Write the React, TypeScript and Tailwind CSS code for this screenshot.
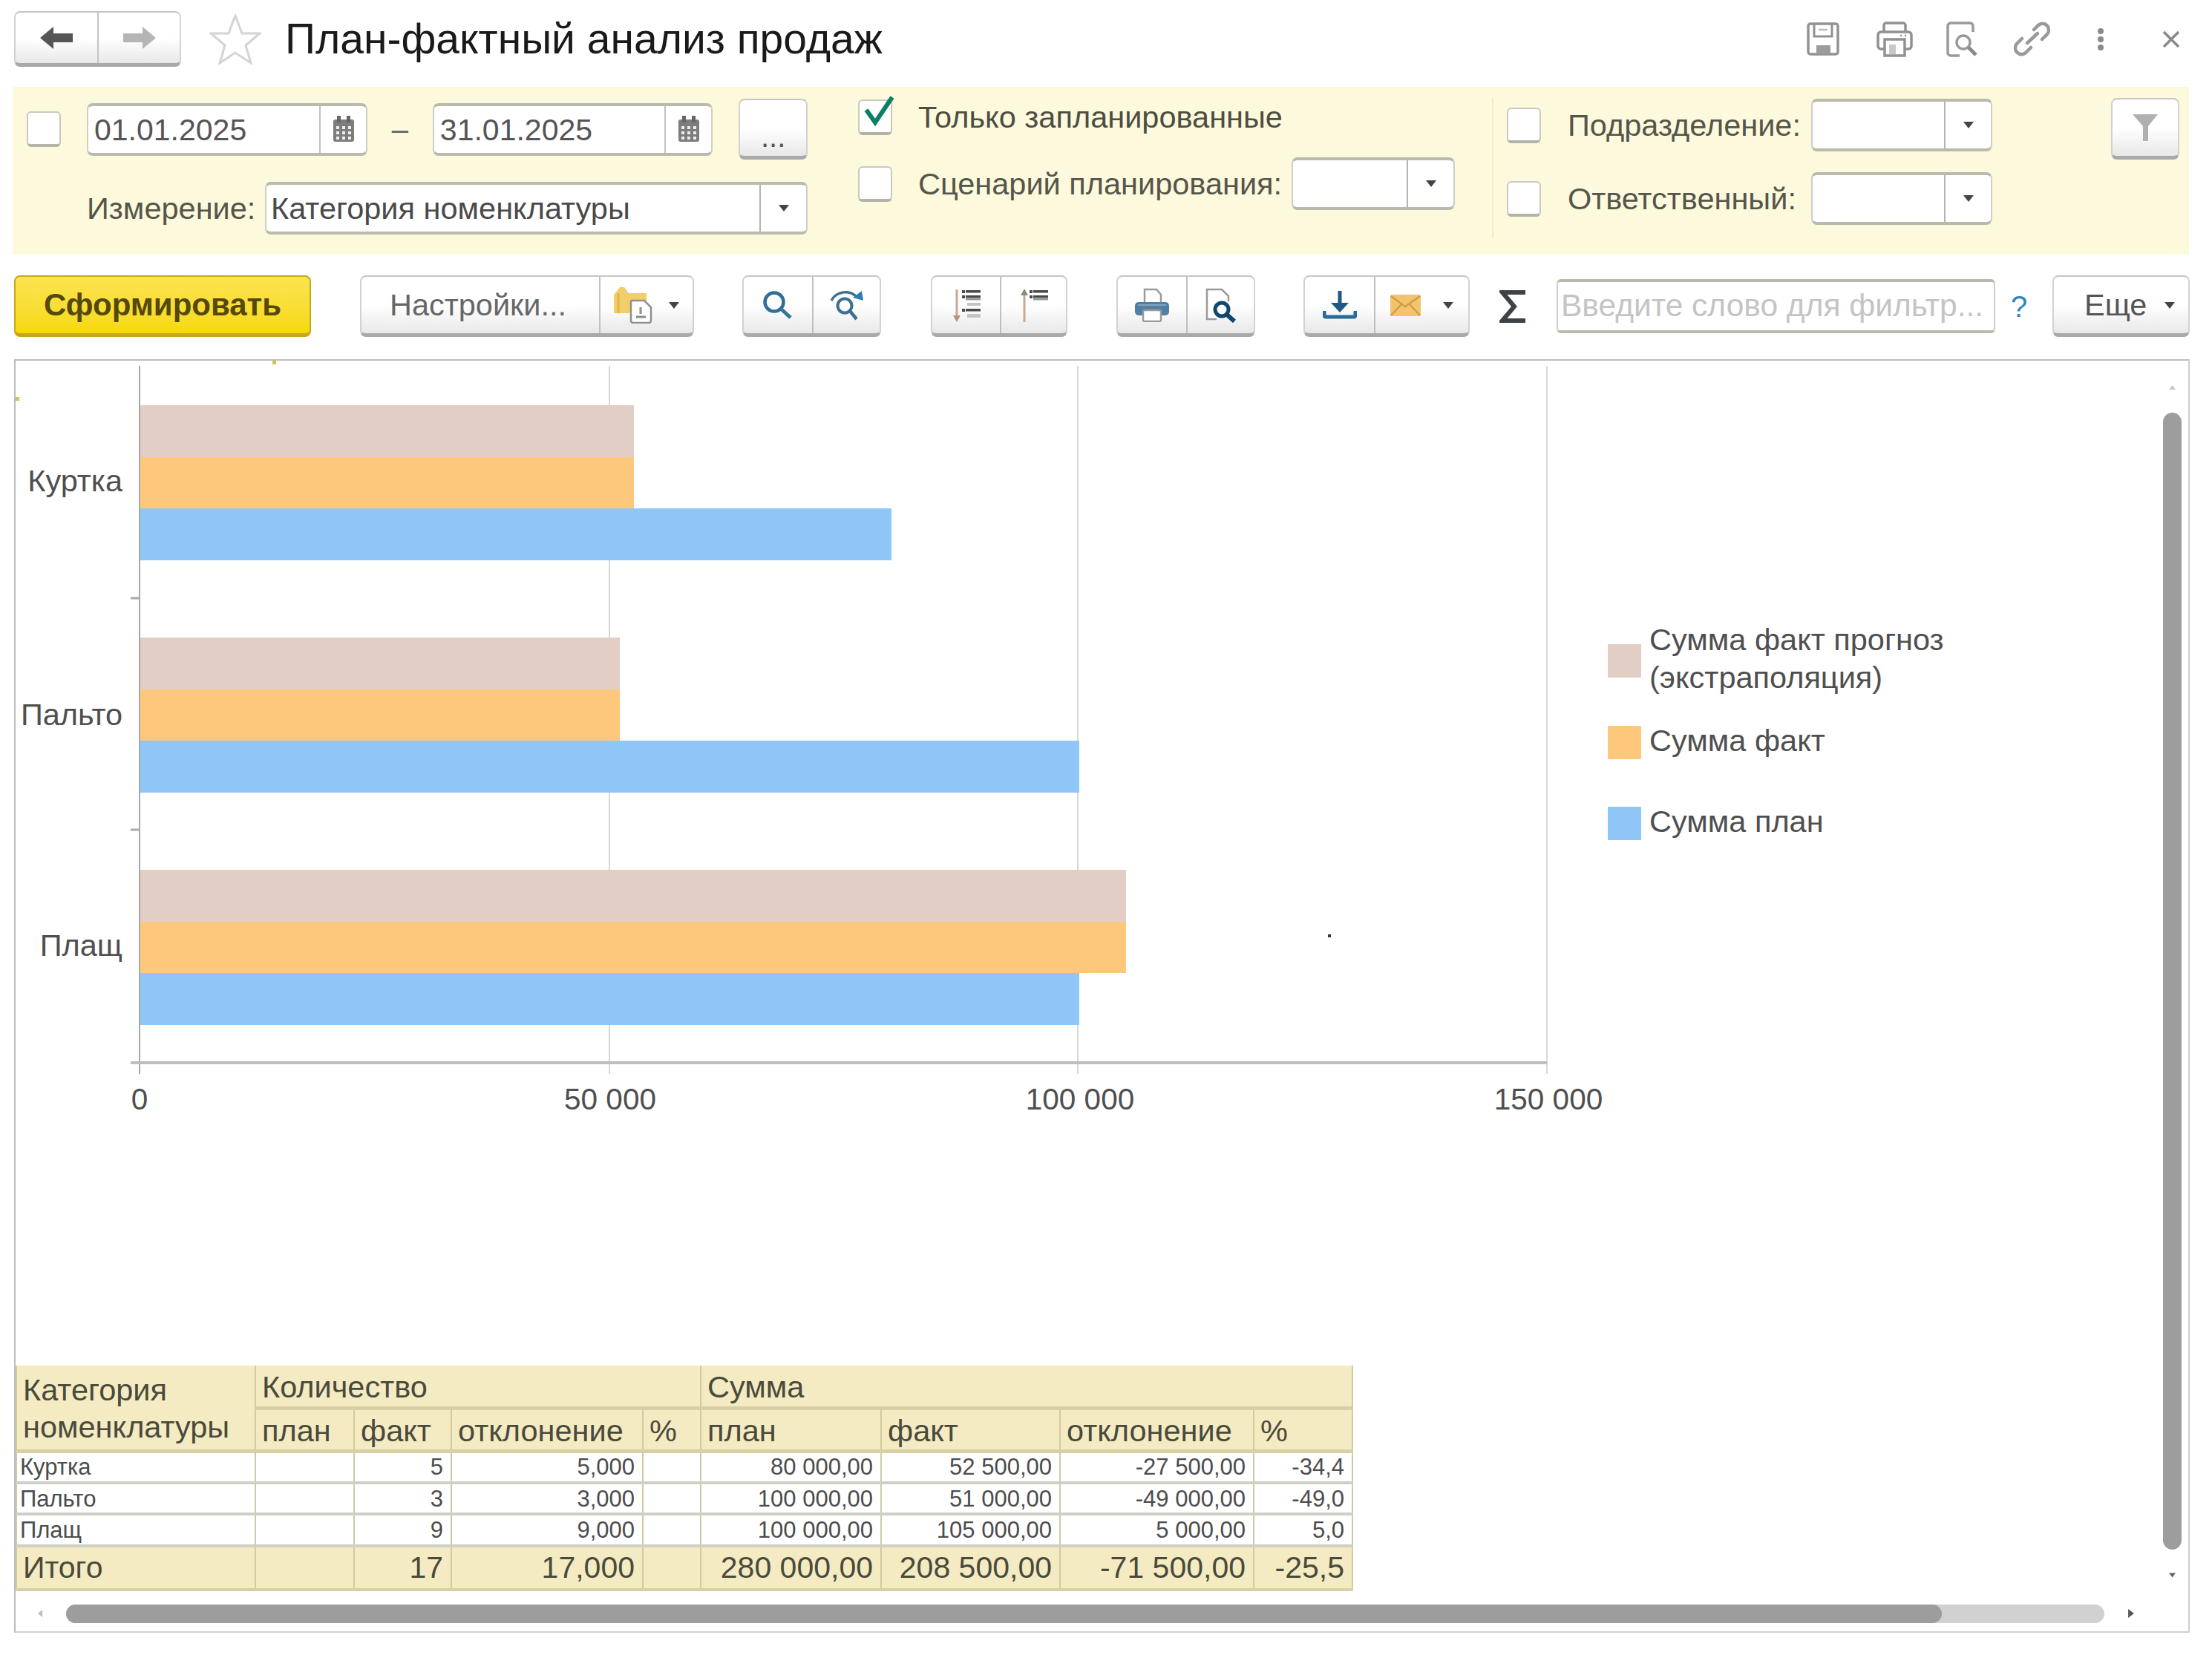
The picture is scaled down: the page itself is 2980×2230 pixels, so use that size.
import type { ReactNode } from "react";

const btn =
  "flex items-center justify-center border-2 border-[#d2d2d2] border-b-[5px] border-b-[#a9a9a9] border-t-[#c6c6c6] bg-linear-to-b from-white from-50% to-[#e8e8e8]";
const field = "flex bg-white border-2 border-[#cfcfc6] border-t-4 border-t-[#b9b9ae] border-b-4 border-b-[#b9b9ae] rounded-lg";

function Caret({ color = "#444" }: { color?: string }) {
  return (
    <svg width="14" height="9" viewBox="0 0 14 9">
      <polygon points="0,0 14,0 7,9" fill={color} />
    </svg>
  );
}

function Checkbox({ checked }: { checked?: boolean }) {
  return (
    <div className="relative h-[48px] w-[46px] shrink-0 rounded-md border-2 border-[#c9c9c0] border-b-4 border-b-[#b3b3a8] border-t-[#c9c9c0] bg-white">
      {checked ? (
        <svg className="absolute -top-[8px] left-[6px]" width="42" height="42" viewBox="0 0 42 42">
          <path d="M3 20 L15 37 L38 3" fill="none" stroke="#0b7f63" strokeWidth="6" />
        </svg>
      ) : null}
    </div>
  );
}

function DateField({ value }: { value: string }) {
  return (
    <div className={`${field} h-[71px] w-[378px] items-center`}>
      <span className="flex-1 pl-[8px] pt-[3px] text-[41px] leading-none text-[#555]">{value}</span>
      <div className="flex h-full w-[63px] items-center justify-center border-l-2 border-[#c4c4bb]">
        <svg width="30" height="36" viewBox="0 0 30 36">
          <rect x="1" y="5" width="28" height="30" rx="3" fill="#7d7d7d" />
          <rect x="6" y="0" width="5" height="9" fill="#666" />
          <rect x="19" y="0" width="5" height="9" fill="#666" />
          <g fill="#eee">
            <rect x="5" y="14" width="4" height="4" />
            <rect x="13" y="14" width="4" height="4" />
            <rect x="21" y="14" width="4" height="4" />
            <rect x="5" y="21" width="4" height="4" />
            <rect x="13" y="21" width="4" height="4" />
            <rect x="21" y="21" width="4" height="4" />
            <rect x="5" y="28" width="4" height="4" />
            <rect x="13" y="28" width="4" height="4" />
            <rect x="21" y="28" width="4" height="4" />
          </g>
        </svg>
      </div>
    </div>
  );
}

function Combo({ width, text }: { width: string; text?: string }) {
  return (
    <div className={`${field} h-[71px] ${width} items-center`}>
      <span className="flex-1 pl-[6px] text-[41.5px] leading-none text-[#4a4a4a]">{text}</span>
      <div className="flex h-full w-[63px] items-center justify-center border-l-2 border-[#b4b4ab]">
        <Caret />
      </div>
    </div>
  );
}

function ToolGroup({ items }: { items: { w: string; node: ReactNode }[] }) {
  return (
    <div className={`${btn} h-[83px] rounded-lg`}>
      {items.map((it, i) => (
        <div key={i} className={`flex h-full ${it.w} items-center justify-center ${i > 0 ? "border-l-2 border-[#c0c0c0]" : ""}`}>
          {it.node}
        </div>
      ))}
    </div>
  );
}

const IconSave = () => (
  <svg width="44" height="45" viewBox="0 0 44 45" fill="none" stroke="#929292">
    <rect x="2" y="2" width="40" height="41" rx="3" strokeWidth="3.5" />
    <path d="M10 3 V19 H34 V3" strokeWidth="3" />
    <path d="M16 10 H28" strokeWidth="2.5" stroke="#bbb" />
    <rect x="13" y="31" width="19" height="12" fill="#9c9c9c" strokeWidth="0" />
  </svg>
);
const IconPrintTop = () => (
  <svg width="49" height="48" viewBox="0 0 49 48" fill="none" stroke="#919191" strokeWidth="3.5">
    <path d="M10 14 V5 a3 3 0 0 1 3-3 H36 a3 3 0 0 1 3 3 V14" />
    <path d="M11 37 H6 a4 4 0 0 1-4-4 V18 a4 4 0 0 1 4-4 H43 a4 4 0 0 1 4 4 V33 a4 4 0 0 1-4 4 H38" />
    <rect x="11" y="24" width="27" height="22" fill="#fff" />
    <rect x="17" y="31" width="9" height="13" fill="#c8c8c8" strokeWidth="0" />
    <path d="M32 19 H34 M38 19 H40" strokeWidth="2.5" />
  </svg>
);
const IconPreviewTop = () => (
  <svg width="44" height="48" viewBox="0 0 44 48" fill="none" stroke="#999" strokeWidth="3.5">
    <path d="M19 46 H7 a4 4 0 0 1-4-4 V6 a4 4 0 0 1 4-4 H33 a4 4 0 0 1 4 4 V14" />
    <circle cx="24" cy="28" r="9" />
    <path d="M31 35 L41 45" strokeWidth="5" stroke="#8a8a8a" />
  </svg>
);
const IconLink = () => (
  <svg width="49" height="47" viewBox="0 0 49 47" fill="none" stroke="#999" strokeWidth="4.5" strokeLinecap="round">
    <path d="M27 11 L33 5 a8.5 8.5 0 0 1 12 12 L38 24" />
    <path d="M11 23 L4 30 a8.5 8.5 0 0 0 12 12 L23 35" />
    <path d="M18 29 L32 16" />
  </svg>
);
const IconFolder = () => (
  <svg width="52" height="50" viewBox="0 0 52 50">
    <path d="M0 11 L8 1 H14 L20 9 H44 V36 H0 Z" fill="#f2cd68" />
    <path d="M6 9 V36" stroke="#e2b54a" strokeWidth="3" />
    <path d="M24 19 H41 L50 28 V46 a3 3 0 0 1-3 3 H26 a3 3 0 0 1-3-3 V20 Z" fill="#fff" stroke="#8f8f8f" strokeWidth="2.5" />
    <path d="M36 28 V37 M30 41 H43" stroke="#8d8d8d" strokeWidth="3" />
  </svg>
);
const IconSearch = () => (
  <svg width="40" height="38" viewBox="0 0 40 38" fill="none" stroke="#2f6e99">
    <circle cx="15" cy="15" r="12.5" strokeWidth="4.5" />
    <path d="M24 24 L37 36" strokeWidth="5" stroke="#3b7295" />
  </svg>
);
const IconSearchAgain = () => (
  <svg width="44" height="41" viewBox="0 0 44 41" fill="none" stroke="#3d6f91">
    <path d="M1 14 C8 1 26 -1 35 9" strokeWidth="3.5" />
    <path d="M30 10 L44 14 L42 1 Z" fill="#2e7db0" strokeWidth="0" />
    <circle cx="19" cy="21" r="9.5" strokeWidth="4" />
    <path d="M26 28 L35 39" strokeWidth="4.5" />
  </svg>
);
const IconSortDown = () => (
  <svg width="38" height="45" viewBox="0 0 38 45">
    <path d="M6 1 V40" stroke="#c9a992" strokeWidth="3" />
    <polygon points="1,36 11,36 6,45" fill="#b0957f" />
    <g fill="#4a4a4a">
      <rect x="13" y="2" width="4" height="4" />
      <rect x="18" y="2" width="20" height="3.5" />
      <rect x="13" y="9" width="4" height="4" />
      <rect x="18" y="9" width="20" height="3.5" />
      <rect x="18" y="13" width="20" height="2.5" fill="#999" />
      <rect x="13" y="27" width="4" height="4" />
      <rect x="18" y="27" width="20" height="3.5" />
    </g>
    <g fill="#c4c4c4">
      <rect x="20" y="19" width="18" height="4" />
      <rect x="20" y="34" width="18" height="5" />
    </g>
  </svg>
);
const IconSortUp = () => (
  <svg width="38" height="45" viewBox="0 0 38 45">
    <path d="M6 6 V45" stroke="#c9a992" strokeWidth="3" />
    <polygon points="1,9 11,9 6,0" fill="#8b8b80" />
    <g fill="#4a4a4a">
      <rect x="13" y="2" width="4" height="4" />
      <rect x="18" y="2" width="20" height="3.5" />
      <rect x="13" y="9" width="4" height="4" />
      <rect x="18" y="9" width="20" height="3.5" />
      <rect x="18" y="13" width="20" height="2.5" fill="#999" />
    </g>
  </svg>
);
const IconPrint = () => (
  <svg width="46" height="46" viewBox="0 0 46 46">
    <path d="M13 20 V2 H29 L35 9 V20" fill="#fff" stroke="#9a9a9a" strokeWidth="2.5" />
    <rect x="0" y="19" width="46" height="18" rx="5" fill="#507fa6" />
    <rect x="4" y="22" width="38" height="2" fill="#82a5c2" />
    <rect x="11" y="30" width="24" height="15" rx="2" fill="#fff" stroke="#9a9a9a" strokeWidth="2.5" />
  </svg>
);
const IconPreview = () => (
  <svg width="42" height="47" viewBox="0 0 42 47" fill="none">
    <path d="M15 42 H2 V2 H22 L31 11 V18" stroke="#9a9a9a" strokeWidth="2.5" fill="#fff" />
    <circle cx="22" cy="29" r="9" stroke="#12466c" strokeWidth="5" />
    <path d="M29 36 L39 45" stroke="#12466c" strokeWidth="6" />
  </svg>
);
const IconDownload = () => (
  <svg width="46" height="39" viewBox="0 0 46 39" fill="none">
    <path d="M23 0 V22" stroke="#1d5a86" strokeWidth="5" />
    <polygon points="11,16 35,16 23,29" fill="#1d5a86" />
    <path d="M2 27 V33 a2 2 0 0 0 2 2 H42 a2 2 0 0 0 2-2 V27" stroke="#2a6b97" strokeWidth="5" />
  </svg>
);
const IconMail = () => (
  <svg width="41" height="29" viewBox="0 0 41 29">
    <rect x="0" y="0" width="41" height="29" rx="2" fill="#f3c46c" />
    <path d="M1 2 L20 16 L40 2 M1 28 L15 13 M40 28 L26 13" fill="none" stroke="#d29d45" strokeWidth="2.5" />
  </svg>
);

const bars = [
  { top: 546, forecast: 854, fact: 854, plan: 1201 },
  { top: 859, forecast: 835, fact: 835, plan: 1454 },
  { top: 1172, forecast: 1517, fact: 1517, plan: 1454 },
];

function Chart() {
  return (
    <svg className="block h-[1354px] w-[2893px]" viewBox="21 486 2893 1354">
      {[821, 1452, 2084].map((x) => (
        <path key={x} d={`M${x} 493 V1447`} stroke="#d8d8d8" strokeWidth="2" />
      ))}
      {bars.map((b) => (
        <g key={b.top}>
          <rect x="188" y={b.top} width={b.forecast - 188} height="70" fill="#e3cec6" />
          <rect x="188" y={b.top + 70} width={b.fact - 188} height="69" fill="#fdc87c" />
          <rect x="188" y={b.top + 139} width={b.plan - 188} height="70" fill="#8ec6f8" />
        </g>
      ))}
      <path d="M188 493 V1447" stroke="#a8a8a8" strokeWidth="2" />
      <path d="M176 1432 H2084" stroke="#bdbdbd" strokeWidth="4" />
      <path d="M176 806 H188 M176 1118 H188" stroke="#a8a8a8" strokeWidth="3" />
      <g className="fill-[#4f4f4f] text-[41.5px]">
        <text x="165" y="662" textAnchor="end">Куртка</text>
        <text x="165" y="977" textAnchor="end">Пальто</text>
        <text x="165" y="1288" textAnchor="end">Плащ</text>
        <text x="2222" y="876">Сумма факт прогноз</text>
        <text x="2222" y="927">(экстраполяция)</text>
        <text x="2222" y="1012">Сумма факт</text>
        <text x="2222" y="1121">Сумма план</text>
      </g>
      <g className="fill-[#4f4f4f] text-[40.5px]">
        <text x="188" y="1495" textAnchor="middle">0</text>
        <text x="822" y="1495" textAnchor="middle">50 000</text>
        <text x="1455" y="1495" textAnchor="middle">100 000</text>
        <text x="2086" y="1495" textAnchor="middle">150 000</text>
      </g>
      <rect x="2166" y="868" width="45" height="45" fill="#e3cec6" />
      <rect x="2166" y="978" width="45" height="45" fill="#fdc87c" />
      <rect x="2166" y="1087" width="45" height="45" fill="#8ec6f8" />
      <rect x="1789" y="1259" width="4" height="4" fill="#333" />
      <rect x="367" y="486" width="5" height="5" fill="#d8c24a" />
      <rect x="21" y="535" width="5" height="5" fill="#d8c24a" />
    </svg>
  );
}

const rows = [
  ["Куртка", "", "5", "5,000", "", "80 000,00", "52 500,00", "-27 500,00", "-34,4"],
  ["Пальто", "", "3", "3,000", "", "100 000,00", "51 000,00", "-49 000,00", "-49,0"],
  ["Плащ", "", "9", "9,000", "", "100 000,00", "105 000,00", "5 000,00", "5,0"],
];
const total = ["Итого", "", "17", "17,000", "", "280 000,00", "208 500,00", "-71 500,00", "-25,5"];

const th = "border-x-2 border-b-[5px] border-x-[#d2cb9c] border-b-[#d6d0a4] bg-[#f4ebc2] pl-[8px] pt-[3px] text-left align-middle font-normal";

function ReportTable() {
  return (
    <table className="w-[1800px] table-fixed border-collapse text-[#4a4a3c]">
      <colgroup>
        <col className="w-[322px]" />
        <col className="w-[133px]" />
        <col className="w-[131px]" />
        <col className="w-[258px]" />
        <col className="w-[78px]" />
        <col className="w-[243px]" />
        <col className="w-[241px]" />
        <col className="w-[261px]" />
        <col className="w-[133px]" />
      </colgroup>
      <thead className="text-[41.5px] leading-[50px]">
        <tr className="h-[57px]">
          <th rowSpan={2} className={th}>Категория номенклатуры</th>
          <th colSpan={4} className={th}>Количество</th>
          <th colSpan={4} className={th}>Сумма</th>
        </tr>
        <tr className="h-[58px]">
          {["план", "факт", "отклонение", "%", "план", "факт", "отклонение", "%"].map((t, i) => (
            <th key={i} className={th}>{t}</th>
          ))}
        </tr>
      </thead>
      <tbody>
        {rows.map((r, ri) => (
          <tr key={r[0]} className={ri === 1 ? "h-[42px]" : "h-[43px]"}>
            {r.map((c, i) => (
              <td
                key={i}
                className={`overflow-hidden border-x-2 border-b-4 border-x-[#cdcaa8] border-b-[#cfcfc6] bg-white p-0 text-[31px] leading-none text-[#4c4c4c] ${i === 0 ? "pl-[4px] text-left" : "pr-[10px] text-right"}`}
              >
                {c}
              </td>
            ))}
          </tr>
        ))}
        <tr className="h-[59px]">
          {total.map((c, i) => (
            <td
              key={i}
              className={`border-x-2 border-b-4 border-x-[#d2cb9c] border-b-[#d6d0a4] bg-[#f4ebc2] p-0 text-[41px] leading-none ${i === 0 ? "pl-[8px] text-left" : "pr-[10px] text-right"}`}
            >
              {c}
            </td>
          ))}
        </tr>
      </tbody>
    </table>
  );
}

export default function App() {
  return (
    <div className="flex h-[2230px] w-[2980px] flex-col overflow-hidden bg-white font-['Liberation_Sans',sans-serif]">
      {/* заголовок */}
      <div className="mt-[15px] flex h-[75px] shrink-0 items-center pl-[19px]">
        <div className={`${btn} h-full w-[225px] rounded-lg`}>
          <div className="flex h-full w-[112px] items-center justify-center border-r-2 border-[#c4c4c4]">
            <svg width="44" height="30" viewBox="0 0 44 30">
              <path d="M0 15 L18 0 V9 H44 V21 H18 V30 Z" fill="#555" />
            </svg>
          </div>
          <div className="flex h-full flex-1 items-center justify-center">
            <svg width="44" height="30" viewBox="0 0 44 30">
              <path d="M44 15 L26 0 V9 H0 V21 H26 V30 Z" fill="#b5b5b5" />
            </svg>
          </div>
        </div>
        <svg className="ml-[38px]" width="70" height="68" viewBox="0 0 70 68">
          <polygon points="35,2 44,26 68,26 49,42 56,66 35,52 14,66 21,42 2,26 26,26" fill="#fff" stroke="#d4d4d4" strokeWidth="3" />
        </svg>
        <div className="ml-[32px] text-[57px] leading-none text-[#1a1a1a]">План-фактный анализ продаж</div>
        <div className="ml-auto flex items-center">
          <div className="mr-[50px]"><IconSave /></div>
          <div className="mr-[44px]"><IconPrintTop /></div>
          <div className="mr-[48px]"><IconPreviewTop /></div>
          <div className="mr-[61px]"><IconLink /></div>
          <svg className="mr-[76px]" width="14" height="30" viewBox="0 0 14 30" fill="#8a8a8a">
            <circle cx="7" cy="4" r="4" />
            <circle cx="7" cy="15" r="4" />
            <circle cx="7" cy="26" r="4" />
          </svg>
          <svg className="mr-[43px]" width="24" height="24" viewBox="0 0 24 24" stroke="#8a8a8a" strokeWidth="3.5">
            <path d="M2 2 L22 22 M22 2 L2 22" />
          </svg>
        </div>
      </div>

      {/* панель отбора */}
      <div className="ml-[17px] mt-[27px] flex h-[226px] w-[2932px] shrink-0 bg-[#fdf9dc] pl-[19px]">
        <div className="mt-[16px] w-[1052px]">
          <div className="flex h-[82px] items-center">
            <Checkbox />
            <div className="ml-[35px]"><DateField value="01.01.2025" /></div>
            <div className="w-[88px] text-center text-[40px] leading-none text-[#666]">–</div>
            <DateField value="31.01.2025" />
            <div className={`${btn} ml-[35px] h-[82px] w-[93px] items-end rounded-lg pb-[6px] text-[40px] leading-none text-[#555]`}>...</div>
          </div>
          <div className="mt-[30px] flex items-center pl-[81px]">
            <div className="w-[240px] text-[41.5px] leading-none text-[#55554a]">Измерение:</div>
            <Combo width="w-[731px]" text="Категория номенклатуры" />
          </div>
        </div>

        <div className="ml-[68px] mt-[16px] w-[804px]">
          <div className="flex h-[49px] items-center">
            <Checkbox checked />
            <div className="ml-[35px] text-[41.5px] leading-none text-[#4d4d42]">Только запланированные</div>
          </div>
          <div className="mt-[30px] flex h-[71px] items-center">
            <Checkbox />
            <div className="ml-[35px] w-[503px] text-[41.5px] leading-none text-[#55554a]">Сценарий планирования:</div>
            <Combo width="w-[220px]" />
          </div>
        </div>

        <div className="ml-[50px] mt-[15px] h-[188px] w-[2px] bg-[#f0ebc8]" />

        <div className="ml-[18px] mt-[16px]">
          <div className="flex h-[71px] items-center">
            <Checkbox />
            <div className="ml-[36px] w-[328px] text-[41.5px] leading-none text-[#55554a]">Подразделение:</div>
            <Combo width="w-[244px]" />
          </div>
          <div className="mt-[28px] flex h-[71px] items-center">
            <Checkbox />
            <div className="ml-[36px] w-[328px] text-[41.5px] leading-none text-[#55554a]">Ответственный:</div>
            <Combo width="w-[244px]" />
          </div>
        </div>

        <div className={`${btn} ml-[160px] mt-[15px] h-[83px] w-[92px] rounded-lg`}>
          <svg width="34" height="36" viewBox="0 0 34 36">
            <path d="M0 0 H34 L21 16 V36 H14 V16 Z" fill="#b0b0b0" />
          </svg>
        </div>
      </div>

      {/* командная панель */}
      <div className="ml-[19px] mt-[28px] flex h-[83px] shrink-0 items-center">
        <div className="flex h-full w-[400px] items-center justify-center rounded-lg border-2 border-[#c4a91c] border-b-[5px] bg-linear-to-b from-[#fbe44f] to-[#f7d900] text-[42px] font-bold leading-none text-[#54480a]">
          Сформировать
        </div>
        <div className="ml-[66px]">
          <ToolGroup
            items={[
              { w: "w-[320px]", node: <span className="pr-[6px] text-[41.5px] leading-none text-[#666]">Настройки...</span> },
              {
                w: "w-[126px]",
                node: (
                  <div className="flex items-center gap-[22px]">
                    <IconFolder />
                    <Caret />
                  </div>
                ),
              },
            ]}
          />
        </div>
        <div className="ml-[65px]">
          <ToolGroup items={[{ w: "w-[92px]", node: <IconSearch /> }, { w: "w-[91px]", node: <IconSearchAgain /> }]} />
        </div>
        <div className="ml-[67px]">
          <ToolGroup items={[{ w: "w-[91px]", node: <IconSortDown /> }, { w: "w-[89px]", node: <IconSortUp /> }]} />
        </div>
        <div className="ml-[66px]">
          <ToolGroup items={[{ w: "w-[92px]", node: <IconPrint /> }, { w: "w-[91px]", node: <IconPreview /> }]} />
        </div>
        <div className="ml-[65px]">
          <ToolGroup
            items={[
              { w: "w-[93px]", node: <IconDownload /> },
              {
                w: "w-[127px]",
                node: (
                  <div className="flex items-center gap-[30px]">
                    <IconMail />
                    <Caret />
                  </div>
                ),
              },
            ]}
          />
        </div>
        <svg className="ml-[40px]" width="35" height="46" viewBox="0 0 35 46">
          <path d="M35 4 H4 L20 23 L4 42 H35" fill="none" stroke="#3c4347" strokeWidth="6" />
        </svg>
        <div className={`${field} ml-[42px] h-[73px] w-[591px] items-center overflow-hidden rounded-md border-t-[#a8a8a8] border-b-[#a0a0a0]`}>
          <span className="whitespace-nowrap pl-[4px] text-[42.5px] leading-none text-[#c4c4c4]">Введите слово для фильтр...</span>
        </div>
        <div className="ml-[21px] w-[20px] text-[40px] leading-none text-[#2f86c1]">?</div>
        <div className={`${btn} ml-[36px] h-full w-[185px] justify-start gap-[24px] rounded-lg pl-[41px] text-[41.5px] leading-none text-[#555]`}>
          <span>Еще</span>
          <Caret />
        </div>
      </div>

      {/* отчет */}
      <div className="ml-[19px] mt-[30px] flex h-[1716px] w-[2931px] shrink-0 flex-col border-2 border-[#bdbdbd] border-b-[#cfcfcf] border-r-[#cfcfcf]">
        <div className="flex h-[1664px] shrink-0">
          <div className="w-[2893px]">
            <Chart />
            <ReportTable />
          </div>
          <div className="flex w-[34px] flex-col items-start">
            <svg className="ml-[8px] mt-[32px]" width="9" height="8" viewBox="0 0 14 9">
              <polygon points="7,0 14,9 0,9" fill="#c6c6c6" />
            </svg>
            <div className="mt-[30px] h-[1532px] w-[25px] rounded-full bg-[#9d9d9d]" />
            <svg className="ml-[8px] mt-[30px]" width="9" height="9" viewBox="0 0 14 9">
              <polygon points="0,0 14,0 7,9" fill="#666" />
            </svg>
          </div>
        </div>
        <div className="flex h-[48px] items-center pl-[29px]">
          <svg width="8" height="10" viewBox="0 0 9 14">
            <polygon points="0,7 9,0 9,14" fill="#bfbfbf" />
          </svg>
          <div className="ml-[31px] h-[25px] w-[2746px] rounded-full bg-[#d1d1d1]">
            <div className="h-full w-[2527px] rounded-full bg-[#9d9d9d]" />
          </div>
          <svg className="ml-[32px]" width="8" height="12" viewBox="0 0 9 14">
            <polygon points="9,7 0,0 0,14" fill="#555" />
          </svg>
        </div>
      </div>
    </div>
  );
}
